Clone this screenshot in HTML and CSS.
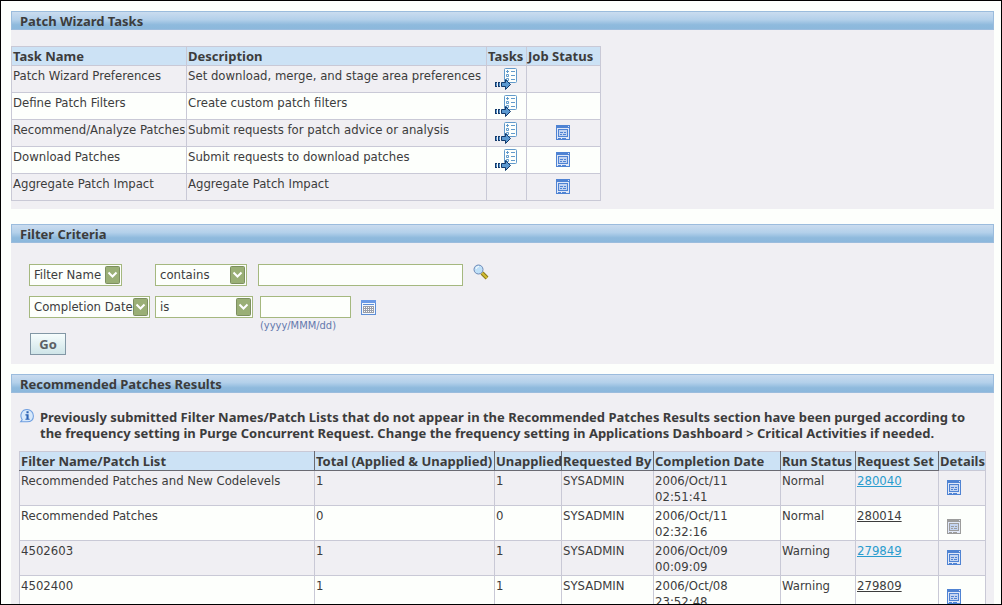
FILE: index.html
```html
<!DOCTYPE html>
<html lang="en">
<head>
  <meta charset="UTF-8" />
  <meta name="viewport" content="width=device-width, initial-scale=1.0"/>
  <title>Patch Wizard</title>
  <link rel="stylesheet" href="styles.css">
</head>
<body>
  <svg class="sprite" aria-hidden="true">
    <symbol id="tasks" viewBox="0 0 22 22">
      <rect x="9.5" y="0.5" width="12" height="14" rx="1" fill="#fdfffc" stroke="#629acb"/>
      <path d="M11 3.5h3M12.5 2v3M16 3.5h4M16 7.5h4M16 11.5h4" stroke="#629acb" fill="none"/>
      <path d="M11.5 6.5h2v2h-2zM11.5 10.5h2v2h-2z" stroke="#629acb" fill="none"/>
      <path d="M0 14h2v5H0zM3 14h2v5H3z" fill="#12396b"/>
      <path d="M1 15h1v3H1zM4 15h1v3H4z" fill="#5b98d0"/>
      <path d="M6.5 14.5h4v-3l5 5-5 5v-3h-4z" fill="#5b98d0" stroke="#12396b"/>
    </symbol>
    <symbol id="status" viewBox="0 0 14 15">
      <rect x="0.5" y="0.5" width="13" height="14" fill="#dfe7f7" stroke="currentColor"/>
      <path d="M0 0h14v3H0z" fill="currentColor"/>
      <path d="M12 1h1v1h-1zM1 3h12v1H1z" fill="#dfe7f7"/>
      <rect x="2.5" y="4.5" width="9" height="7" fill="#c3d4f1" stroke="currentColor"/>
      <path d="M4 7h3v1H4zM8 7h2v1H8zM4 9h2v1H4zM7 9h3v1H7zM2 13h3v1H2zM6 13h4v1H6z" fill="currentColor"/>
    </symbol>
    <symbol id="search" viewBox="0 0 16 16">
      <path d="M9 9l5 5" stroke="#8b7b1b" stroke-width="4"/>
      <path d="M9 9l5 5" stroke="#d3bd34" stroke-width="2"/>
      <circle cx="5.5" cy="5.5" r="4.5" fill="#bfe0f8" stroke="#6d88b5"/>
      <path d="M3 5a3 3 0 0 1 3-2.5" stroke="#fff" fill="none"/>
    </symbol>
    <symbol id="calendar" viewBox="0 0 15 15">
      <rect x="0.5" y="0.5" width="14" height="14" fill="#f4f8fd" stroke="#5d8ed6"/>
      <path d="M0 0h15v3H0z" fill="#6b9ae6"/>
      <path d="M2 4.5h11" stroke="#5d8ed6"/>
      <path d="M2 6h11v7H2z" fill="#9a9ea8"/>
      <path d="M3 7.5h10M3 9.5h10M3 11.5h10" stroke="#fff" stroke-dasharray="1 1"/>
    </symbol>
    <symbol id="info" viewBox="0 0 15 14">
      <path d="M7.5 0.5C11 0.5 13.5 3 13.5 6.5S11 12 7.5 12H1.5L3 10C0 5 3 0.5 7.5 0.5z" fill="#d8e9fb" stroke="#6f9fe0"/>
      <path d="M7 2h2v2H7zM6 5h3v4h1v1H6V9h1V6H6z" fill="#2b62b4"/>
    </symbol>
    <symbol id="arrow" viewBox="0 0 15 18">
      <rect x="0.5" y="0.5" width="14" height="17" rx="1" fill="#9aaf76" stroke="#7d8f60"/>
      <path d="M3.5 6.5l4 4 4-4" fill="none" stroke="#fff" stroke-width="2"/>
    </symbol>
  </svg>

  <div class="page">
    <section class="panel tasks-panel">
      <h2>Patch Wizard Tasks</h2>
      <div class="panel-body">
        <table class="tasks">
          <colgroup><col class="name"><col class="desc"><col class="task"><col class="job"></colgroup>
          <thead>
            <tr><th>Task Name</th><th>Description</th><th>Tasks</th><th>Job Status</th></tr>
          </thead>
          <tbody>
            <tr>
              <td>Patch Wizard Preferences</td>
              <td>Set download, merge, and stage area preferences</td>
              <td class="icon"><a href="#" aria-label="Tasks"><svg class="i-tasks"><use href="#tasks"/></svg></a></td>
              <td></td>
            </tr>
            <tr>
              <td>Define Patch Filters</td>
              <td>Create custom patch filters</td>
              <td class="icon"><a href="#" aria-label="Tasks"><svg class="i-tasks"><use href="#tasks"/></svg></a></td>
              <td></td>
            </tr>
            <tr>
              <td>Recommend/Analyze Patches</td>
              <td>Submit requests for patch advice or analysis</td>
              <td class="icon"><a href="#" aria-label="Tasks"><svg class="i-tasks"><use href="#tasks"/></svg></a></td>
              <td class="icon"><a href="#" aria-label="Job Status"><svg class="i-status"><use href="#status"/></svg></a></td>
            </tr>
            <tr>
              <td>Download Patches</td>
              <td>Submit requests to download patches</td>
              <td class="icon"><a href="#" aria-label="Tasks"><svg class="i-tasks"><use href="#tasks"/></svg></a></td>
              <td class="icon"><a href="#" aria-label="Job Status"><svg class="i-status"><use href="#status"/></svg></a></td>
            </tr>
            <tr>
              <td>Aggregate Patch Impact</td>
              <td>Aggregate Patch Impact</td>
              <td></td>
              <td class="icon"><a href="#" aria-label="Job Status"><svg class="i-status"><use href="#status"/></svg></a></td>
            </tr>
          </tbody>
        </table>
      </div>
    </section>

    <section class="panel filter-panel">
      <h2>Filter Criteria</h2>
      <form class="panel-body">
        <div class="filters">
          <div class="select field-name">
            <select aria-label="First filter field"><option>Filter Name</option></select>
            <svg><use href="#arrow"/></svg>
          </div>
          <div class="select match">
            <select aria-label="First filter condition"><option>contains</option></select>
            <svg><use href="#arrow"/></svg>
          </div>
          <div class="value">
            <input type="text" class="long" aria-label="Filter name" />
            <button type="button" class="icon-button" aria-label="Search"><svg class="i-search"><use href="#search"/></svg></button>
          </div>
          <div class="select">
            <select aria-label="Second filter field"><option>Completion Date</option></select>
            <svg><use href="#arrow"/></svg>
          </div>
          <div class="select">
            <select aria-label="Second filter condition"><option>is</option></select>
            <svg><use href="#arrow"/></svg>
          </div>
          <div class="date">
            <div class="value">
              <input type="text" class="short" id="date" />
              <button type="button" class="icon-button" aria-label="Pick a date"><svg class="i-calendar"><use href="#calendar"/></svg></button>
            </div>
            <label class="hint" for="date">(yyyy/MMM/dd)</label>
          </div>
        </div>
        <button type="button" class="go">Go</button>
      </form>
    </section>

    <section class="panel results-panel">
      <h2>Recommended Patches Results</h2>
      <div class="panel-body">
        <div class="message">
          <svg class="i-info"><use href="#info"/></svg>
          <p>Previously submitted Filter Names/Patch Lists that do not appear in the Recommended Patches Results section have been purged according to the frequency setting in Purge Concurrent Request. Change the frequency setting in Applications Dashboard &gt; Critical Activities if needed.</p>
        </div>
        <table class="results">
          <colgroup><col><col class="total"><col class="unapplied"><col class="by"><col class="completed"><col class="run"><col class="request"><col class="details"></colgroup>
          <thead>
            <tr><th>Filter Name/Patch List</th><th>Total (Applied &amp; Unapplied)</th><th>Unapplied</th><th>Requested By</th><th>Completion Date</th><th>Run Status</th><th>Request Set</th><th>Details</th></tr>
          </thead>
          <tbody>
            <tr>
              <td>Recommended Patches and New Codelevels</td><td>1</td><td>1</td><td>SYSADMIN</td>
              <td>2006/Oct/11<br>02:51:41</td><td>Normal</td><td><a href="#">280040</a></td>
              <td class="icon"><a href="#" aria-label="Details"><svg class="i-status"><use href="#status"/></svg></a></td>
            </tr>
            <tr>
              <td>Recommended Patches</td><td>0</td><td>0</td><td>SYSADMIN</td>
              <td>2006/Oct/11<br>02:32:16</td><td>Normal</td><td><a href="#" class="seen">280014</a></td>
              <td class="icon"><a href="#" aria-label="Details"><svg class="i-status off"><use href="#status"/></svg></a></td>
            </tr>
            <tr>
              <td>4502603</td><td>1</td><td>1</td><td>SYSADMIN</td>
              <td>2006/Oct/09<br>00:09:09</td><td>Warning</td><td><a href="#">279849</a></td>
              <td class="icon"><a href="#" aria-label="Details"><svg class="i-status"><use href="#status"/></svg></a></td>
            </tr>
            <tr>
              <td>4502400</td><td>1</td><td>1</td><td>SYSADMIN</td>
              <td>2006/Oct/08<br>23:52:48</td><td>Warning</td><td><a href="#" class="seen">279809</a></td>
              <td class="icon"><a href="#" aria-label="Details"><svg class="i-status"><use href="#status"/></svg></a></td>
            </tr>
          </tbody>
        </table>
      </div>
    </section>
  </div>
</body>
</html>
```
FILE: styles.css
```css
* {
  box-sizing: border-box;
}

body {
  margin: 0;
  font-family: "DejaVu Sans Condensed", Tahoma, sans-serif;
  font-size: 13px;
  line-height: 16px;
  color: #3c3c3c;
  background-color: #fdfffc;
}

h2, th, .message, .go {
  font-family: "Noto Sans", Tahoma, sans-serif;
  font-weight: bold;
}

.sprite {
  display: none;
}

.page {
  height: 100vh;
  overflow: hidden;
  border: 1px solid #000;
  padding: 10px 7px 0 10px;
}

.panel {
  background: #f0eff3;
  margin-bottom: 10px;
}

.tasks-panel {
  margin-bottom: 15px;
}

h2 {
  margin: 0;
  padding: 0 8px;
  height: 19px;
  font-size: 13px;
  line-height: 18px;
  border: 1px solid #9bbcdd;
  background: linear-gradient(#cadcef, #b3d0ea 45%, #8fbadd 75%, #8cb8dc);
}

/* tables */
table {
  border-collapse: collapse;
  table-layout: fixed;
}

th, td {
  border: 1px solid #c9c9d6;
  padding: 1px;
  text-align: left;
  vertical-align: top;
  white-space: nowrap;
}

th {
  height: 19px;
  background: #cce2f5;
}

td {
  padding: 2px 1px 0;
}

tbody tr:nth-child(even) {
  background: #fdfffc;
}

td.icon {
  padding: 0 3px 1px 1px;
  vertical-align: middle;
}

.icon svg {
  display: block;
  margin: 0 auto;
}

.i-tasks {
  width: 22px;
  height: 22px;
}

.i-status {
  width: 14px;
  height: 15px;
  color: #4f83d3;
}

.i-status.off {
  color: #9c9c9c;
}

.tasks-panel .panel-body {
  padding: 16px 0 8px;
}

.tasks {
  width: 590px;
}

.tasks td {
  height: 27px;
}

.name { width: 175px; }
.desc { width: 300px; }
.task { width: 40px; }
.job { width: 74px; }

/* filter form */
.filter-panel .panel-body {
  padding: 21px 18px 9px;
}

.filters {
  display: grid;
  grid-template-columns: 121px 98px auto;
  column-gap: 5px;
  row-gap: 10px;
}

.select {
  position: relative;
  height: 22px;
}

.field-name { width: 93px; }
.match { width: 92px; }

select, input {
  width: 100%;
  height: 22px;
  font: inherit;
  color: inherit;
  border: 1px solid #a5b87f;
  border-radius: 0;
  background: #fdfffc;
  padding: 0 4px;
}

select {
  appearance: none;
}

.select svg {
  position: absolute;
  top: 2px;
  right: 2px;
  width: 15px;
  height: 18px;
  pointer-events: none;
}

.value {
  display: flex;
  gap: 10px;
}

.value .long { width: 205px; }
.value .short { width: 91px; }

.date {
  padding-left: 2px;
}

.icon-button {
  display: flex;
  height: 22px;
  padding: 0;
  border: 0;
  background: none;
}

.i-search {
  width: 16px;
  height: 16px;
}

.i-calendar {
  width: 15px;
  height: 15px;
  margin-top: 4px;
}

.hint {
  display: block;
  font-size: 11px;
  line-height: 15px;
  color: #6478ad;
}

.go {
  display: block;
  width: 36px;
  height: 22px;
  margin-left: 1px;
  padding: 0;
  font-size: 13px;
  color: #5c6064;
  border: 1px solid #8297a5;
  background: linear-gradient(#f6fdfd, #cfe5e8);
}

/* results */
.results-panel .panel-body {
  padding: 16px 8px 0;
}

.message {
  display: flex;
  gap: 5px;
  margin-bottom: 10px;
}

.message p {
  margin: 0;
}

.i-info {
  flex: none;
  width: 16px;
  height: 15px;
}

.results {
  width: 100%;
}

.results th {
  border-right-color: #6a6a72;
  border-bottom-color: #6a6a72;
}

.results th:last-child {
  border-right-color: #c9c9d6;
  border-bottom-color: #c9c9d6;
}

.results td {
  height: 35px;
}

.results a {
  color: #2a9cce;
}

.results a.seen {
  color: #3c3c3c;
}

.results td.icon {
  padding-right: 18px;
}

.results tr:nth-child(even) td.icon {
  padding-top: 8px;
}

.total { width: 180px; }
.unapplied { width: 67px; }
.by { width: 92px; }
.completed { width: 127px; }
.run { width: 75px; }
.request { width: 83px; }
.details { width: 47px; }
```
